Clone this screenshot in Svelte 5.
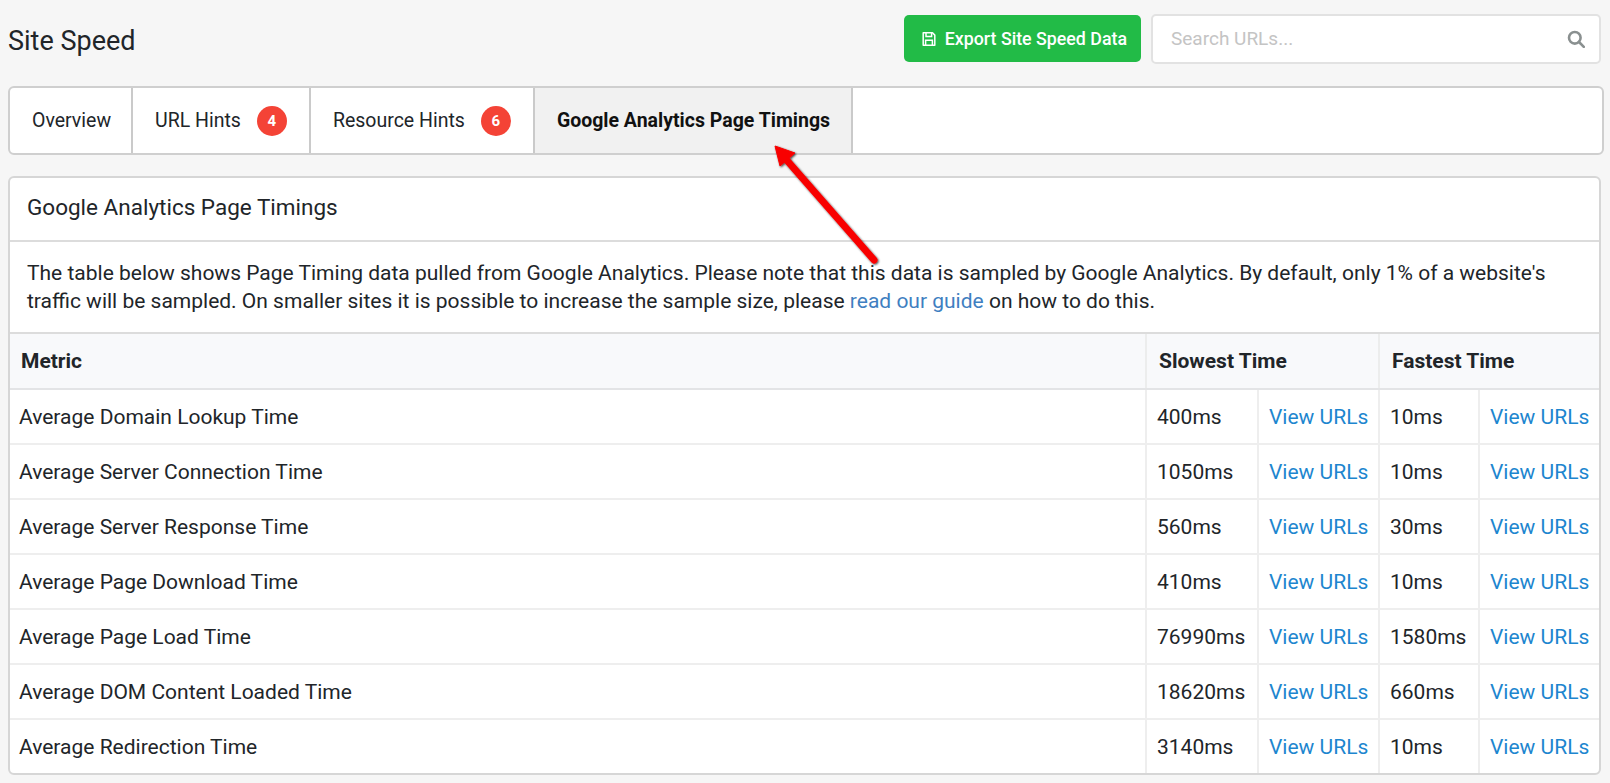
<script lang="ts">
  const rows = [
    { metric: 'Average Domain Lookup Time', slowest: '400ms', fastest: '10ms' },
    { metric: 'Average Server Connection Time', slowest: '1050ms', fastest: '10ms' },
    { metric: 'Average Server Response Time', slowest: '560ms', fastest: '30ms' },
    { metric: 'Average Page Download Time', slowest: '410ms', fastest: '10ms' },
    { metric: 'Average Page Load Time', slowest: '76990ms', fastest: '1580ms' },
    { metric: 'Average DOM Content Loaded Time', slowest: '18620ms', fastest: '660ms' },
    { metric: 'Average Redirection Time', slowest: '3140ms', fastest: '10ms' }
  ];
</script>

<div class="page">
  <header class="top">
    <h1>Site Speed</h1>
    <div class="actions">
      <button class="export">
        <svg viewBox="0 0 16 16" width="16" height="16" fill="none" stroke="currentColor" stroke-width="1.5" aria-hidden="true">
          <path d="M2.2 1.8h9.3l2.3 2.3v10.1H2.2z" stroke-linejoin="round" />
          <path d="M5 2v3.6h5.6V2M4.6 14V9.2h6.8V14" />
        </svg>
        Export Site Speed Data
      </button>
      <div class="search">
        <span class="placeholder">Search URLs...</span>
        <svg viewBox="0 0 18 18" width="18" height="18" fill="none" stroke="#8a9090" stroke-width="2.6" aria-hidden="true">
          <circle cx="7.8" cy="7.8" r="5.8" />
          <path d="M12 12l4.8 4.8" stroke-linecap="round" />
        </svg>
      </div>
    </div>
  </header>

  <nav class="tabs">
    <a class="tab">Overview</a>
    <a class="tab">URL Hints <span class="badge">4</span></a>
    <a class="tab">Resource Hints <span class="badge">6</span></a>
    <a class="tab active">Google Analytics Page Timings</a>
  </nav>

  <section class="panel">
    <h2>Google Analytics Page Timings</h2>
    <p>
      The table below shows Page Timing data pulled from Google Analytics. Please note that this data is sampled by Google Analytics. By default, only 1% of a website's traffic will be sampled. On smaller sites it is possible to increase the sample size, please <a class="guide">read our guide</a> on how to do this.
    </p>
    <table>
      <colgroup>
        <col />
        <col class="c1" />
        <col class="c2" />
        <col class="c3" />
        <col class="c4" />
      </colgroup>
      <thead>
        <tr>
          <th>Metric</th>
          <th colspan="2">Slowest Time</th>
          <th colspan="2">Fastest Time</th>
        </tr>
      </thead>
      <tbody>
        {#each rows as row}
          <tr>
            <td>{row.metric}</td>
            <td>{row.slowest}</td>
            <td><a class="view">View URLs</a></td>
            <td>{row.fastest}</td>
            <td><a class="view">View URLs</a></td>
          </tr>
        {/each}
      </tbody>
    </table>
  </section>

  <svg class="arrow" viewBox="0 0 120 130" width="120" height="130" aria-hidden="true">
    <defs>
      <filter id="arrow-shadow" x="-20%" y="-20%" width="140%" height="140%">
        <feDropShadow dx="1" dy="1" stdDeviation="1.2" flood-color="#000" flood-opacity="0.75" />
      </filter>
    </defs>
    <g filter="url(#arrow-shadow)">
      <path d="M12 16L102 119" stroke="#f80000" stroke-width="7" stroke-linecap="round" />
      <path d="M3 5L23 12L8 25z" fill="#f80000" stroke="#f80000" stroke-width="1" stroke-linejoin="round" />
    </g>
  </svg>
</div>

<style>
  :global(body) {
    margin: 0;
    background: #f6f6f6;
    font-family: Roboto, "Liberation Sans", sans-serif;
    color: #212529;
  }

  .page {
    position: relative;
    padding: 0 6px 0 8px;
    height: 783px;
    box-sizing: border-box;
    overflow: hidden;
  }

  .top {
    display: flex;
    align-items: center;
    justify-content: space-between;
    height: 86px;
    padding-right: 3px;
    padding-bottom: 9px;
    box-sizing: border-box;
  }

  h1 {
    margin: 4px 0 0;
    font-size: 27px;
    font-weight: 400;
  }

  .actions {
    display: flex;
    align-items: center;
    gap: 10px;
  }

  .export {
    display: flex;
    align-items: center;
    gap: 8px;
    height: 47px;
    padding: 0 14px 0 17px;
    border: none;
    border-radius: 5px;
    background: #22bb47;
    color: #fff;
    font: 500 17.8px Roboto, sans-serif;
  }

  .search {
    display: flex;
    align-items: center;
    justify-content: space-between;
    width: 450px;
    height: 50px;
    padding: 0 14px 0 18px;
    box-sizing: border-box;
    background: #fff;
    border: 2px solid #e2e2e2;
    border-radius: 5px;
  }

  .placeholder {
    font-size: 19px;
    color: #c4c4c4;
  }

  .tabs {
    display: flex;
    height: 69px;
    box-sizing: border-box;
    background: #fff;
    border: 2px solid #cfcfcf;
    border-radius: 6px;
    overflow: hidden;
  }

  .tab {
    display: flex;
    align-items: center;
    gap: 16px;
    padding: 0 22px;
    border-right: 2px solid #cacaca;
    font-size: 19.5px;
  }

  .tab:first-child {
    padding-right: 20px;
  }

  .tab.active {
    padding-right: 21px;
    background: #f1f1f1;
    font-weight: 700;
    color: #111;
  }

  .badge {
    display: flex;
    align-items: center;
    justify-content: center;
    width: 30px;
    height: 30px;
    border-radius: 50%;
    background: #f44336;
    color: #fff;
    font-size: 15px;
    font-weight: 700;
  }

  .panel {
    margin: 21px 3px 0 0;
    background: #fff;
    border: 2px solid #d6d6d6;
    border-radius: 6px;
    overflow: hidden;
  }

  h2 {
    margin: 0;
    height: 64px;
    padding: 0 17px 4px;
    display: flex;
    align-items: center;
    box-sizing: border-box;
    border-bottom: 2px solid #dcdcdc;
    font-size: 22.5px;
    font-weight: 400;
  }

  p {
    margin: 0;
    padding: 17px 16px 17px 17px;
    font-size: 21px;
    line-height: 28px;
  }

  .guide {
    color: #3f7fc1;
  }

  table {
    width: 100%;
    table-layout: fixed;
    border-collapse: collapse;
    font-size: 21px;
  }

  .c1 { width: 112px; }
  .c2 { width: 121px; }
  .c3 { width: 100px; }
  .c4 { width: 120px; }

  th {
    height: 54px;
    padding: 0 12px;
    text-align: left;
    font-weight: 700;
    background: #f8f9fb;
    border-top: 2px solid #dcdcdc;
    border-bottom: 2px solid #e3e4e6;
    border-left: 2px solid #eceded;
  }

  th:first-child {
    border-left: none;
    padding-left: 11px;
  }

  td {
    height: 55px;
    padding: 0 10px;
    box-sizing: border-box;
    border-top: 2px solid #eeeeee;
    border-left: 2px solid #eeeeee;
    white-space: nowrap;
  }

  td:first-child {
    border-left: none;
    padding-left: 9px;
  }

  tbody tr:first-child td {
    border-top: none;
  }

  tbody tr:last-child td {
    height: 54px;
  }

  .view {
    color: #1d86cf;
  }

  .arrow {
    position: absolute;
    left: 772px;
    top: 141px;
  }
</style>
